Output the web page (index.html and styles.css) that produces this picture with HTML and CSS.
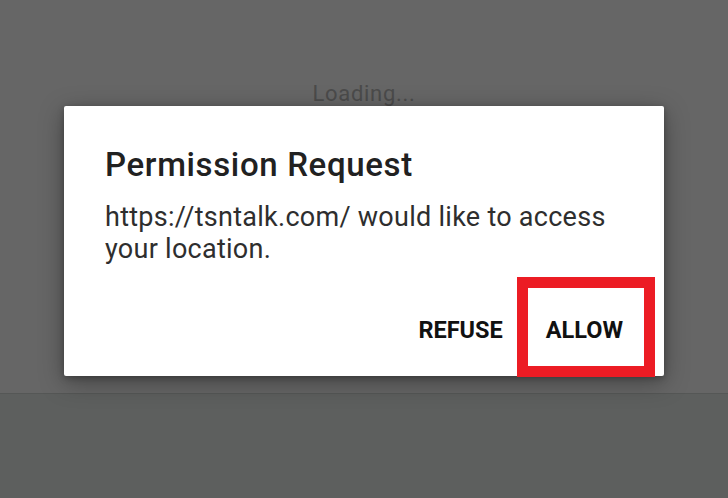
FILE: index.html
```html
<!DOCTYPE html>
<html>
<head>
<meta charset="utf-8">
<link rel="stylesheet" href="styles.css">
</head>
<body>
<div class="page">
  <div class="loading">Loading...</div>
  <div class="spacer"></div>
  <div class="bottom"></div>
</div>
<div class="dialog">
  <h1 class="title">Permission Request</h1>
  <p class="message">https://tsntalk.com/ would like to access your location.</p>
  <div class="actions">
    <button class="btn">REFUSE</button>
    <button class="btn btn-allow">ALLOW<span class="highlight"></span></button>
  </div>
</div>
</body>
</html>
```

FILE: styles.css
```css
html, body {
  margin: 0;
  padding: 0;
  width: 728px;
  height: 498px;
  overflow: hidden;
  background: #666666;
  font-family: Roboto, "Liberation Sans", sans-serif;
}
.page {
  display: flex;
  flex-direction: column;
  height: 498px;
}
.loading {
  padding-top: 80px;
  text-align: center;
  font-size: 22px;
  letter-spacing: 0.7px;
  line-height: 28px;
  color: #4b4b4b;
}
.spacer {
  flex: 1;
}
.bottom {
  height: 104px;
  background: #5d5f5e;
  border-top: 1px solid #555756;
}
.dialog {
  position: absolute;
  left: 64px;
  top: 106px;
  width: 600px;
  height: 270px;
  box-sizing: border-box;
  background: #ffffff;
  border-radius: 2px;
  box-shadow: 0 6px 24px rgba(0,0,0,0.35), 0 2px 6px rgba(0,0,0,0.25);
  padding: 39px 41px 0 41px;
  color: #212121;
}
.title {
  margin: 0;
  font-size: 33px;
  letter-spacing: 0.65px;
  font-weight: 500;
  line-height: 40px;
}
.message {
  margin: 16px 0 0 0;
  font-size: 27px;
  letter-spacing: 0.27px;
  line-height: 32px;
  color: #2e2e2e;
}
.actions {
  display: flex;
  justify-content: flex-end;
  align-items: center;
  gap: 43px;
  margin-top: 52px;
  padding-right: 0;
}
.btn {
  position: relative;
  border: 0;
  background: transparent;
  padding: 0;
  font-family: Roboto, "Liberation Sans", sans-serif;
  font-size: 23.5px;
  font-weight: 700;
  color: #111111;
  line-height: 26px;
}
.highlight {
  position: absolute;
  left: -29px;
  right: -32px;
  top: -40px;
  bottom: -34px;
  border: 11px solid #ec1c24;
}
```
